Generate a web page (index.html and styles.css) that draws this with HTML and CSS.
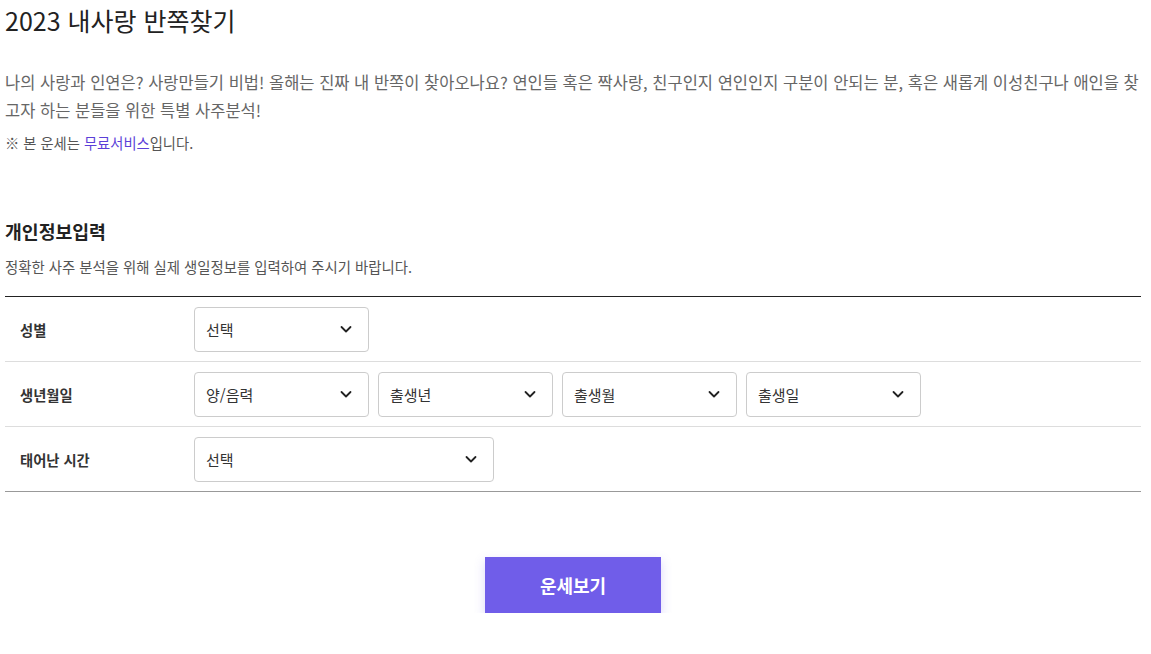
FILE: index.html
```html
<!DOCTYPE html>
<html lang="ko">
<head>
    <meta charset="UTF-8">
    <meta name="viewport" content="width=device-width, initial-scale=1.0">
    <title>2023 내사랑 반쪽찾기</title>
    <link rel="stylesheet" href="styles.css">
</head>
<body>
    <div class="fortune-page">
        <h1 class="page-title">2023 내사랑 반쪽찾기</h1>
        <p class="intro">나의 사랑과 인연은? 사랑만들기 비법! 올해는 진짜 내 반쪽이 찾아오나요? 연인들 혹은 짝사랑, 친구인지 연인인지 구분이 안되는 분, 혹은 새롭게 이성친구나 애인을 찾고자 하는 분들을 위한 특별 사주분석!</p>
        <p class="notice">※ 본 운세는 <a href="#">무료서비스</a>입니다.</p>

        <h2 class="section-title">개인정보입력</h2>
        <p class="section-desc">정확한 사주 분석을 위해 실제 생일정보를 입력하여 주시기 바랍니다.</p>

        <div class="info-form">
            <div class="form-row">
                <div class="form-label">성별</div>
                <div class="form-fields">
                    <div class="select-box">
                        <span>선택</span>
                        <svg width="14" height="14" viewBox="0 0 14 14"><path d="M2.5 5l4.5 4.5L11.5 5" fill="none" stroke="#222" stroke-width="1.8" stroke-linecap="round" stroke-linejoin="round"/></svg>
                    </div>
                </div>
            </div>
            <div class="form-row">
                <div class="form-label">생년월일</div>
                <div class="form-fields">
                    <div class="select-box">
                        <span>양/음력</span>
                        <svg width="14" height="14" viewBox="0 0 14 14"><path d="M2.5 5l4.5 4.5L11.5 5" fill="none" stroke="#222" stroke-width="1.8" stroke-linecap="round" stroke-linejoin="round"/></svg>
                    </div>
                    <div class="select-box">
                        <span>출생년</span>
                        <svg width="14" height="14" viewBox="0 0 14 14"><path d="M2.5 5l4.5 4.5L11.5 5" fill="none" stroke="#222" stroke-width="1.8" stroke-linecap="round" stroke-linejoin="round"/></svg>
                    </div>
                    <div class="select-box">
                        <span>출생월</span>
                        <svg width="14" height="14" viewBox="0 0 14 14"><path d="M2.5 5l4.5 4.5L11.5 5" fill="none" stroke="#222" stroke-width="1.8" stroke-linecap="round" stroke-linejoin="round"/></svg>
                    </div>
                    <div class="select-box">
                        <span>출생일</span>
                        <svg width="14" height="14" viewBox="0 0 14 14"><path d="M2.5 5l4.5 4.5L11.5 5" fill="none" stroke="#222" stroke-width="1.8" stroke-linecap="round" stroke-linejoin="round"/></svg>
                    </div>
                </div>
            </div>
            <div class="form-row">
                <div class="form-label">태어난 시간</div>
                <div class="form-fields">
                    <div class="select-box wide">
                        <span>선택</span>
                        <svg width="14" height="14" viewBox="0 0 14 14"><path d="M2.5 5l4.5 4.5L11.5 5" fill="none" stroke="#222" stroke-width="1.8" stroke-linecap="round" stroke-linejoin="round"/></svg>
                    </div>
                </div>
            </div>
        </div>

        <div class="button-wrap">
            <button class="submit-btn">운세보기</button>
        </div>
    </div>
</body>
</html>
```

FILE: styles.css
```css
/* Fortune page styling */
body {
    font-family: "Noto Sans CJK KR", "Noto Sans", sans-serif;
    margin: 0;
    padding: 0;
    background-color: #ffffff;
    color: #222;
}

.fortune-page {
    padding: 0 10px 0 5px;
}

.page-title {
    font-size: 25px;
    font-weight: 400;
    line-height: 40px;
    margin: 0;
    color: #222;
}

.intro {
    font-size: 16.5px;
    line-height: 28px;
    color: #666;
    margin: 28px 0 0;
}

.notice {
    font-size: 14.3px;
    line-height: 24px;
    color: #555;
    margin: 7px 0 0;
}

.notice a {
    color: #5b3fd8;
    text-decoration: none;
}

.section-title {
    font-size: 18.3px;
    font-weight: 700;
    line-height: 26px;
    margin: 63px 0 0;
    color: #222;
}

.section-desc {
    font-size: 14.4px;
    line-height: 20px;
    color: #555;
    margin: 13px 0 0;
}

.info-form {
    margin-top: 19px;
    border-top: 1px solid #222;
    border-bottom: 1px solid #999;
}

.form-row {
    display: flex;
    align-items: center;
    height: 64px;
}

.form-row + .form-row {
    border-top: 1px solid #ddd;
}

.form-label {
    width: 174px;
    padding-left: 15px;
    font-size: 14.3px;
    font-weight: 700;
    color: #333;
}

.form-fields {
    display: flex;
    gap: 9px;
}

.select-box {
    box-sizing: border-box;
    width: 175px;
    height: 45px;
    border: 1px solid #ccc;
    border-radius: 4px;
    display: flex;
    align-items: center;
    justify-content: space-between;
    padding: 0 15px 0 11px;
    font-size: 15px;
    color: #333;
}

.select-box.wide {
    width: 300px;
}

.select-box svg {
    display: block;
}

.button-wrap {
    display: flex;
    justify-content: center;
    padding-top: 65px;
}

.submit-btn {
    width: 176px;
    height: 56px;
    border: none;
    background-color: #705de9;
    color: #fff;
    font-family: inherit;
    font-size: 18px;
    font-weight: 700;
    box-shadow: 0 4px 10px rgba(112, 93, 233, 0.25);
    cursor: pointer;
}
```
